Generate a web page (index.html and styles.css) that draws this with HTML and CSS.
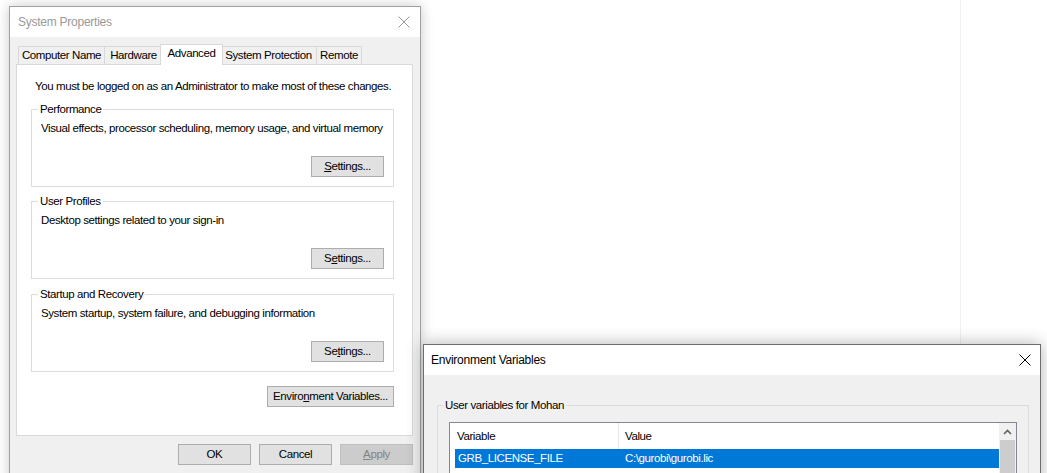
FILE: index.html
```html
<!DOCTYPE html>
<html lang="en">
<head>
<meta charset="utf-8">
<title>System Properties</title>
<link rel="stylesheet" href="styles.css">
</head>
<body>
<div class="desktop">
  <div class="pane"></div>

  <div class="window sysprops">
    <div class="titlebar">
      <span class="title">System Properties</span>
      <svg class="close" width="12" height="12" viewBox="0 0 12 12"><path d="M0.5 0.5 L11.5 11.5 M11.5 0.5 L0.5 11.5" stroke="#9a9a9a" stroke-width="1" fill="none"/></svg>
    </div>
    <div class="body">
      <div class="tabs">
        <div class="tab t-cn">Computer Name</div>
        <div class="tab t-hw">Hardware</div>
        <div class="tab t-adv active">Advanced</div>
        <div class="tab t-sp">System Protection</div>
        <div class="tab t-rm">Remote</div>
      </div>
      <div class="tabpanel">
        <div class="intro">You must be logged on as an Administrator to make most of these changes.</div>
        <fieldset class="group">
          <legend>Performance</legend>
          <div class="desc">Visual effects, processor scheduling, memory usage, and virtual memory</div>
          <button class="btn"><u>S</u>ettings...</button>
        </fieldset>
        <fieldset class="group">
          <legend>User Profiles</legend>
          <div class="desc">Desktop settings related to your sign-in</div>
          <button class="btn">S<u>e</u>ttings...</button>
        </fieldset>
        <fieldset class="group group-last">
          <legend>Startup and Recovery</legend>
          <div class="desc">System startup, system failure, and debugging information</div>
          <button class="btn">Se<u>t</u>tings...</button>
        </fieldset>
        <button class="btn envbtn">Enviro<u>n</u>ment Variables...</button>
      </div>
      <div class="footer">
        <button class="btn">OK</button>
        <button class="btn">Cancel</button>
        <button class="btn disabled"><u>A</u>pply</button>
      </div>
    </div>
  </div>

  <div class="window envvars">
    <div class="titlebar">
      <span class="title">Environment Variables</span>
      <svg class="close" width="12" height="12" viewBox="0 0 12 12"><path d="M0.5 0.5 L11.5 11.5 M11.5 0.5 L0.5 11.5" stroke="#000" stroke-width="1" fill="none"/></svg>
    </div>
    <div class="body">
      <fieldset class="group usergroup">
        <legend>User variables for Mohan</legend>
        <div class="listview">
          <div class="lv-main">
            <div class="lv-head">
              <div class="hcell hvar">Variable</div>
              <div class="hcell hval">Value</div>
            </div>
            <div class="lv-row selected">
              <div class="cell cvar">GRB_LICENSE_FILE</div>
              <div class="cell cval">C:\gurobi\gurobi.lic</div>
            </div>
            <div class="lv-row">
              <div class="cell cvar">GUROBI_HOME</div>
              <div class="cell cval">C:\gurobi910\win64</div>
            </div>
          </div>
          <div class="scrollbar">
            <div class="sb-up">
              <svg width="9" height="6" viewBox="0 0 9 6"><path d="M1 5 L4.5 1.5 L8 5" stroke="#606060" stroke-width="1.6" fill="none"/></svg>
            </div>
            <div class="sb-thumb"></div>
          </div>
        </div>
      </fieldset>
    </div>
  </div>
</div>
</body>
</html>
```
FILE: styles.css
```css
* { box-sizing: border-box; }
html, body { margin: 0; padding: 0; }
body {
  width: 1047px;
  height: 473px;
  overflow: hidden;
  background: #fff;
  font-family: "Liberation Sans", Arial, sans-serif;
  font-size: 11.5px;
  letter-spacing: -0.4px;
  color: #000;
}
.desktop { position: relative; width: 1047px; height: 473px; overflow: hidden; }
.pane {
  position: absolute; left: 0; top: 0;
  width: 961px; height: 473px;
  border-right: 1px solid #f1f1f1;
}
.window { position: absolute; display: flex; flex-direction: column; background: #f0f0f0; }
.sysprops {
  left: 9px; top: 6px; width: 412px; height: 500px;
  border: 1px solid #a0a0a0;
  box-shadow: 0 0 12px rgba(0,0,0,0.22);
}
.envvars {
  left: 423px; top: 344px; width: 618px; height: 200px;
  border: 1px solid #6e6e6e;
  box-shadow: 0 0 16px rgba(0,0,0,0.3);
}
.titlebar {
  flex: none; height: 30px; background: #fff;
  display: flex; align-items: center; justify-content: space-between;
}
.sysprops .titlebar { padding: 0 10px 0 8px; }
.envvars .titlebar { padding: 0 9px 0 7px; }
.title { line-height: 15px; font-size: 12px; letter-spacing: -0.25px; }
.sysprops .title { color: #999; }
.close { display: block; }
.body { flex: 1; background: #f0f0f0; display: flex; flex-direction: column; }
.sysprops .body { padding: 7px 7px 0 6px; }

.tabs { display: flex; align-items: flex-end; height: 20px; padding-left: 2px; }
.tab {
  height: 18px; line-height: 17px; padding: 0;
  border: 1px solid #d9d9d9; border-bottom: 0;
  margin-right: -1px; background: #f0f0f0; white-space: nowrap;
  text-align: center;
}
.t-cn { width: 87px; }
.t-hw { width: 59px; }
.t-adv { width: 63px; }
.t-sp { width: 97px; }
.t-rm { width: 46px; }
.tab.active {
  height: 21px; line-height: 17px;
  margin: 0 -3px -1px -2px; background: #fff;
  position: relative; z-index: 1;
}
.tabpanel {
  height: 372px; background: #fff; border: 1px solid #d9d9d9;
  padding: 14px 18px 0 14px;
  display: flex; flex-direction: column;
}
.intro { line-height: 15px; padding-left: 4px; white-space: nowrap; }
.group {
  margin: 8px 0 0; padding: 4px 9px 9px 9px;
  border: 1px solid #dcdcdc; min-width: 0;
  display: flex; flex-direction: column;
}
.group + .group { margin-top: 7px; }
.group.group-last { margin-top: 8px; }
.group legend { padding: 0 2px; margin-left: -3px; line-height: 15px; }
.desc { line-height: 15px; white-space: nowrap; }
.btn {
  width: 73px; height: 21px; padding: 0;
  border: 1px solid #adadad; background: #e1e1e1;
  font: inherit; letter-spacing: inherit; line-height: 19px; color: #000; text-align: center;
  white-space: nowrap;
}
.group .btn { align-self: flex-end; margin-top: 20px; }
.envbtn { align-self: flex-end; width: 127px; margin-top: 14px; }
.footer { display: flex; justify-content: flex-end; gap: 8px; padding-top: 8px; }
.btn.disabled { background: #cccccc; border-color: #bfbfbf; color: #838383; }

.envvars .body { padding: 23px 11px 0 13px; }
.usergroup { margin: 0; padding: 9px 11px 0 11px; flex: 1; }
.usergroup legend { margin-left: -6px; }
.listview { flex: 1; display: flex; border: 1px solid #828790; background: #fff; }
.lv-main { flex: 1; display: flex; flex-direction: column; }
.lv-head { display: flex; height: 26px; }
.hcell { line-height: 26px; white-space: nowrap; }
.hvar { width: 169px; padding-left: 7px; border-right: 1px solid #e5e5e5; }
.hval { padding-left: 6px; }
.lv-row { display: flex; height: 19px; margin-left: 5px; }
.lv-row.selected { background: #0078d7; color: #fff; }
.cell { line-height: 19px; white-space: nowrap; }
.cvar { width: 164px; padding-left: 3px; }
.cval { padding-left: 6px; }
.scrollbar { width: 17px; background: #f0f0f0; display: flex; flex-direction: column; }
.sb-up { height: 17px; display: flex; align-items: center; justify-content: center; }
.sb-thumb { flex: 1; margin: 0 1px; background: #cdcdcd; }
```
